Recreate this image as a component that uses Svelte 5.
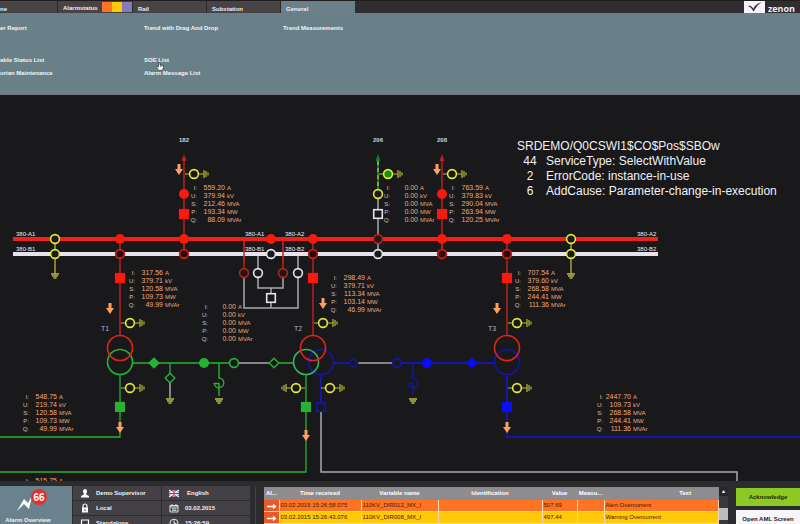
<script>
  const RED = '#f8190f'
  const DARK_RED = '#b9211d'
  const YELLOW = '#e6e838'
  const GREEN = '#28b135'
  const BLUE = '#0c0cf5'
  const NAVY = '#1515a8'
  const WHITE = '#e6e3ee'
  const GREY = '#a9a9ad'

  const names = ['I:', 'U:', 'S:', 'P:', 'Q:']
  const units = ['A', 'kV', 'MVA', 'MW', 'MVAr']

  // x is the right edge of the value column, y the first baseline
  const readings = [
    { x: 225, y: 190, values: ['559.20', '379.94', '212.46', '193.34', '88.09'] },
    { x: 418, y: 190, values: ['0.00', '0.00', '0.00', '0.00', '0.00'] },
    { x: 483, y: 190, values: ['763.59', '379.83', '290.04', '263.94', '120.25'] },
    { x: 163, y: 275, values: ['317.56', '379.71', '120.58', '109.73', '49.99'] },
    { x: 365, y: 280, values: ['298.49', '379.71', '113.34', '103.14', '46.99'] },
    { x: 549, y: 275, values: ['707.54', '379.60', '268.58', '244.41', '111.36'] },
    { x: 236, y: 309, values: ['0.00', '0.00', '0.00', '0.00', '0.00'] },
    { x: 57, y: 399, values: ['548.75', '219.74', '120.58', '109.73', '49.99'] },
    { x: 631, y: 399, values: ['2447.70', '109.73', '268.58', '244.41', '111.36'] },
    { x: 57, y: 483, values: ['515.75'] }
  ]

  const busLabels = [
    { x: 16, n: 1 },
    { x: 245, n: 1 },
    { x: 285, n: 2 },
    { x: 637, n: 2 }
  ]

  const alarms = [
    { color: 'orange', time: '03.02.2015 15:26:58.075', variable: '110KV_DIR012_MX_I', value: '507.69', text: 'Alert Overcurrent' },
    { color: 'yellow', time: '03.02.2015 15:26:43.076', variable: '110KV_DIR008_MX_I', value: '497.44', text: 'Warning Overcurrent' },
    { color: 'orange', time: '', variable: '', value: '', text: '' }
  ]
</script>

<div class="page">
  <header>
    <nav class="tabs">
      <button class="tab first">ne</button>
      <button class="tab status">Alarmstatus <span class="lights"><i class="o"></i><i class="y"></i><i class="p"></i></span></button>
      <button class="tab">Rail</button>
      <button class="tab">Substation</button>
      <button class="tab active">General</button>
    </nav>
    <div class="brand">
      <svg width="21" height="12" viewBox="0 0 21 12" aria-hidden="true">
        <rect width="21" height="12" fill="#f6f4fa" />
        <path d="M4 5.300 C6 4.300 7.700 5 9.300 7.800 C11 4.500 13 2.300 17.500 1.600 C14 3.500 12 6 9.700 10.500 C8 8.500 7 6 4 5.300Z" fill="#333238" />
      </svg>
      <span>zenon</span>
    </div>
  </header>

  <nav class="menu">
    <div class="group">
      <a href="#shift">er Report</a>
      <a href="#trend">Trend with Drag And Drop</a>
      <a href="#measurements">Trend Measurements</a>
    </div>
    <div class="group">
      <a href="#variables">able Status List</a>
      <a href="#soe" class="soe">SOE List
        <svg class="cursor" width="8" height="9" viewBox="0 0 8 9" aria-hidden="true">
          <path d="M2.500 .5 V5 L1 4.500 L.6 5.200 L2.600 8.400 H6.400 L7.400 5.500 V3.500 L4 3 V.8Z" fill="#fff" stroke="#26323a" stroke-width=".7" />
          <path d="M4.500 3.500 V5 M5.800 3.700 V5" stroke="#26323a" stroke-width=".5" />
        </svg>
      </a>
      <span></span>
      <a href="#historian">orian Maintenance</a>
      <a href="#alarms">Alarm Message List</a>
    </div>
  </nav>

  <svg class="diagram" viewBox="0 95 800 386">
    {#snippet wire(d, color, width = 1.5)}
      <path {d} fill="none" stroke={color} stroke-width={width} />
    {/snippet}

    {#snippet ring(x, y, color, fill = '#19181a')}
      <circle cx={x} cy={y} r="4.4" {fill} stroke={color} stroke-width="1.6" />
    {/snippet}

    {#snippet dot(x, y, color)}
      <circle cx={x} cy={y} r="5" fill={color} />
    {/snippet}

    {#snippet breaker(x, y, color, closed = true)}
      <rect x={x - 4.3} y={y - 4.3} width="8.600" height="8.600" fill={closed ? color : '#19181a'} stroke={color} stroke-width="1.6" />
    {/snippet}

    {#snippet diamond(x, y, color, closed = true)}
      <path d="M{x} {y - 4.8}l4.800 4.800l-4.800 4.800l-4.800-4.800Z" fill={closed ? color : '#19181a'} stroke={color} stroke-width="1.4" />
    {/snippet}

    {#snippet arrow(x, y)}
      <path d="M{x - 1.5} {y}h3v5h2.500l-4 6l-4-6h2.500Z" fill="#ffa05a" />
    {/snippet}

    {#snippet ground(x, y)}
      <path d="M{x - 4} {y}h8M{x - 3} {y + 2}h6M{x - 1.500} {y + 4}h3" stroke="#b9bb3c" stroke-width="1.3" />
    {/snippet}

    {#snippet earthing(x, y, dir = 1, fill = '#19181a')}
      <path d="M{x - 9 * dir} {y}H{x - 5 * dir}M{x + 5 * dir} {y}h{5 * dir}v-4v8M{x + 12 * dir} {y - 3}v6M{x + 14 * dir} {y - 1.500}v3" fill="none" stroke="#b9bb3c" stroke-width="1.2" />
      {@render ring(x, y, YELLOW, fill)}
    {/snippet}

    {#snippet winding(x, y, color)}
      <circle cx={x} cy={y} r="12.5" fill="none" stroke={color} stroke-width="1.6" />
    {/snippet}

    {#snippet coil(x, color)}
      <path d="M{x} 363V378a4.800 4.800 0 1 1-4.800 5.500h4.800V396" fill="none" stroke={color} stroke-width="1.4" />
      {@render ground(x, 399)}
    {/snippet}

    {#snippet feeder(x, name)}
      <text class="name" {x} y="142">{name}</text>
      <path d="M{x} 154l2.500 7h-5Z" fill={DARK_RED} />
      {@render wire(`M${x} 160V254`, DARK_RED)}
      {@render arrow(x - 5, 164)}
      {@render earthing(x + 10, 174)}
      {@render dot(x, 194, RED)}
      {@render breaker(x, 214, RED)}
    {/snippet}

    {#snippet transformerBay(x, name, arrowY)}
      {@render wire(`M${x} 254V335`, DARK_RED)}
      {@render breaker(x, 278, RED)}
      {@render arrow(name === 'T2' ? x + 10 : x - 10, arrowY)}
      {@render earthing(x + 10, 323)}
      <text class="transformer" x={x - 15} y="331">{name}</text>
    {/snippet}

    <!-- feeders and bays -->
    {@render feeder(184, '182')}
    {@render feeder(442, '208')}
    {@render transformerBay(120, 'T1', 303)}
    {@render transformerBay(313, 'T2', 298)}
    {@render transformerBay(507, 'T3', 303)}

    <text class="name" x="378" y="142">206</text>
    <path d="M378 154l2.500 7h-5Z" fill="#167d20" />
    {@render wire('M378 160V190', '#167d20', 2)}
    <path d="M378 161V190" stroke="#b9c83c" stroke-width="1.3" stroke-dasharray="4 3" />
    {@render wire('M378 198V239', GREY)}
    {@render earthing(388, 174, 1, '#139016')}
    {@render ring(378, 194, YELLOW)}
    {@render breaker(378, 214, WHITE, false)}

    <!-- coupling -->
    {@render wire('M244 278V308H298V256M271 288V308M258 256V288H283V278', GREY)}
    {@render wire('M244 239V273M283 239V273', DARK_RED)}
    {@render ring(244, 273, DARK_RED)}
    {@render ring(258, 273, WHITE)}
    {@render ring(283, 273, DARK_RED)}
    {@render ring(298, 273, WHITE)}
    {@render breaker(271, 298, WHITE, false)}

    <!-- bus bars -->
    {@render wire('M13 239H658', '#f3201a', 4)}
    {@render wire('M13 254H658', WHITE, 4)}
    {@render wire('M120 239V254M184 239V254M313 239V254M442 239V254M507 239V254M244 241V262M283 241V262', DARK_RED)}
    {@render wire('M378 239V254', GREY)}
    {#each [120, 184, 271, 313, 442, 507] as x}
      {@render dot(x, 239, RED)}
    {/each}
    {@render ring(378, 239, DARK_RED)}
    {#each [120, 184, 313, 442, 507] as x}
      {@render ring(x, 254, '#cf1d1c', '#280a0c')}
    {/each}
    {@render ring(271, 254, WHITE)}
    {@render ring(378, 254, WHITE)}
    {#each [55, 571] as x}
      {@render wire(`M${x} 239V274`, '#b9bb3c', 1.3)}
      {@render ring(x, 239, YELLOW)}
      {@render ring(x, 254, YELLOW)}
      {@render ground(x, 274)}
    {/each}
    {#each busLabels as label}
      <text class="bus" x={label.x} y="236">380-A{label.n}</text>
      <text class="bus" x={label.x} y="251">380-B{label.n}</text>
    {/each}

    <!-- green network -->
    {@render wire('M132 363H234M279 363H293M120 375V437H0M306 375V472H0M170 363V373', GREEN, 1.3)}
    {@render wire('M239 363H269M170 383V398', GREY)}
    {@render diamond(154, 363, GREEN)}
    {@render diamond(170, 378, GREEN, false)}
    {@render ground(170, 399)}
    {@render dot(204, 363, GREEN)}
    {@render coil(219, GREEN)}
    {@render ring(234, 363, GREEN)}
    {@render diamond(274, 363, GREEN, false)}
    {@render breaker(120, 407, GREEN)}
    {@render breaker(306, 407, GREEN)}
    {@render arrow(120, 422)}
    {@render arrow(306, 430)}

    <!-- blue network -->
    {@render wire('M333 363H349M402 363H495M321 375V403M507 375V437H800', NAVY, 2)}
    {@render wire('M358 363H393M321 412V472H737V481', GREY)}
    {@render diamond(353, 363, NAVY, false)}
    {@render ring(397, 363, NAVY)}
    {@render coil(413, NAVY)}
    {@render dot(427, 363, BLUE)}
    {@render diamond(472, 363, BLUE)}
    {@render breaker(321, 407, NAVY, false)}
    {@render breaker(507, 407, BLUE)}
    {@render arrow(507, 422)}

    {@render earthing(130, 388)}
    {@render earthing(296, 388, -1)}
    {@render earthing(330, 388)}
    {@render earthing(517, 388)}

    {@render winding(120, 362, GREEN)}
    {@render winding(120, 348, '#e0231c')}
    {@render winding(321, 362, NAVY)}
    {@render winding(306, 362, '#35b35a')}
    {@render winding(313, 348, '#e0231c')}
    {@render winding(507, 362, NAVY)}
    {@render winding(507, 348, '#e0231c')}

    {#each readings as reading}
      {#each reading.values as value, i}
        <text class="label" x={reading.x - 28} y={reading.y + i * 8}>{names[i]}</text>
        <text class="value" x={reading.x} y={reading.y + i * 8}>{value}</text>
        <text class="unit" x={reading.x + 2} y={reading.y + i * 8}>{units[i]}</text>
      {/each}
    {/each}

    <g class="message">
      <text x="517" y="150">SRDEMO/Q0CSWI1$CO$Pos$SBOw</text>
      <text x="530" y="165" class="code">44</text>
      <text x="546" y="165">ServiceType: SelectWithValue</text>
      <text x="530" y="180" class="code">2</text>
      <text x="546" y="180">ErrorCode: instance-in-use</text>
      <text x="530" y="195" class="code">6</text>
      <text x="546" y="195">AddCause: Parameter-change-in-execution</text>
    </g>
  </svg>

  <footer>
    <button class="overview">
      <svg width="32" height="30" viewBox="0 0 32 30" aria-hidden="true">
        <path d="M2 24L9 12L13 16L17 9L14 22L9 17Z" fill="#fff" />
        <circle cx="24" cy="10" r="8" fill="#e3302c" />
        <text x="24" y="14" class="count">66</text>
      </svg>
      <span>Alarm Overview</span>
    </button>

    <div class="info">
      <div>
        <svg width="10" height="10" viewBox="0 0 10 10"><path d="M5 1a2.200 2.400 0 0 1 1.200 4.300L6.300 6.500L9 8V9.500H1V8L3.700 6.500L3.800 5.300A2.200 2.400 0 0 1 5 1Z" fill="#fff" /></svg>
        Demo Supervisor
      </div>
      <div>
        <svg width="10" height="10" viewBox="0 0 10 10">
          <rect y="2" width="10" height="7" fill="#39407c" />
          <path d="M0 2L10 9M10 2L0 9" stroke="#f2eef4" stroke-width="1.500" />
          <path d="M5 2V9M0 5.500H10" stroke="#f2eef4" stroke-width="2.400" />
          <path d="M5 2V9M0 5.500H10" stroke="#d22b3c" stroke-width="1.200" />
        </svg>
        <span class="lang">English</span>
      </div>
      <div>
        <svg width="10" height="10" viewBox="0 0 10 10"><path d="M3 5V3a2 2 0 0 1 4 0V5" fill="none" stroke="#fff" stroke-width="1.200" /><rect x="2" y="4.500" width="6" height="5" fill="#fff" /><rect x="4.500" y="6" width="1" height="2" fill="#444" /></svg>
        Local
      </div>
      <div>
        <svg width="10" height="10" viewBox="0 0 10 10"><path d="M1 2.500H9V9H1ZM1 4H9M3 1V3M7 1V3M3 5.800H7.500M3 7.300H7.500" fill="none" stroke="#eee" stroke-width=".9" /></svg>
        03.02.2015
      </div>
      <div>
        <svg width="10" height="10" viewBox="0 0 10 10"><path d="M1.500 2H8.500V7.500H1.500ZM3.500 9H6.500" fill="none" stroke="#fff" stroke-width="1.200" /></svg>
        Standalone
      </div>
      <div>
        <svg width="10" height="10" viewBox="0 0 10 10"><circle cx="5" cy="5.200" r="4" fill="none" stroke="#eee" /><path d="M5 2.500V5.500H7.500" fill="none" stroke="#eee" /></svg>
        15:26:59
      </div>
    </div>

    <div class="alarms">
      <table>
        <thead>
          <tr>
            <th class="ack">Al...</th>
            <th class="time">Time received</th>
            <th class="variable">Variable name</th>
            <th class="ident">Identification</th>
            <th class="val">Value</th>
            <th class="unit-col">Measu...</th>
            <th class="text-col">Text</th>
          </tr>
        </thead>
        <tbody>
          {#each alarms as alarm}
            <tr class={alarm.color}>
              <td class="flag"><svg width="12" height="8" viewBox="0 0 12 8"><path d="M2 4.500H10M8 2.500L10.500 4.500L8 6.500" fill="none" stroke="#fff" stroke-width="1.300" /></svg></td>
              <td>{alarm.time}</td>
              <td>{alarm.variable}</td>
              <td></td>
              <td>{alarm.value}</td>
              <td></td>
              <td>{alarm.text}</td>
            </tr>
          {/each}
        </tbody>
      </table>
      <div class="scroll">
        <button aria-label="Scroll up">▴</button>
        <i></i>
      </div>
    </div>

    <div class="actions">
      <button class="ok">Acknowledge</button>
      <button>Open AML Screen</button>
    </div>
  </footer>
</div>

<style>
  :global(body) {
    background: #19181a;
  }
  .page {
    display: flex;
    flex-direction: column;
    height: 100vh;
    overflow: hidden;
    background: #19181a;
    font-family: "Liberation Sans", Arial, sans-serif;
    font-size: 6px;
  }
  button {
    border: 0;
    padding: 0;
    font: inherit;
    color: inherit;
  }
  header {
    display: flex;
    justify-content: space-between;
    flex: none;
    height: 13px;
    box-sizing: border-box;
    border-top: 1px solid #211c1e;
    background: #2f2d31;
    color: #f0eef2;
  }
  .tabs {
    display: flex;
  }
  .tab {
    width: 74px;
    box-sizing: border-box;
    padding: 3px 0 0 5px;
    border-right: 1px solid #2b282b;
    background: #484446;
    color: #f0eef2;
    font-weight: bold;
    line-height: 8px;
    text-align: left;
  }
  .tab.first {
    width: 58px;
    padding-left: 0;
  }
  .tab.status {
    display: flex;
    justify-content: space-between;
    width: 75px;
  }
  .tab.active {
    background: #6b8089;
    border: 0;
  }
  .lights {
    display: flex;
    height: 10px;
    margin-top: -2px;
  }
  .lights i {
    width: 10px;
  }
  .lights .o { background: #ff7326; }
  .lights .y { background: #ffcb08; }
  .lights .p { background: #827cb8; }
  .brand {
    display: flex;
    gap: 3px;
    padding-right: 5px;
    font-family: "Open Sans", sans-serif;
    font-size: 9px;
    font-weight: bold;
    line-height: 15px;
  }

  .menu {
    flex: none;
    height: 82px;
    box-sizing: border-box;
    padding-top: 9px;
    border-bottom: 1px solid #747880;
    background: #6a8089;
  }
  .group {
    display: grid;
    grid-template-columns: 144px 139px 1fr;
    grid-auto-rows: 13px;
    margin-bottom: 19px;
  }
  .menu a {
    color: #f3f6f8;
    font-weight: bold;
    line-height: 13px;
    text-decoration: none;
  }
  .soe {
    position: relative;
  }
  .cursor {
    position: absolute;
    left: 12px;
    top: 8px;
  }

  .diagram {
    display: block;
    flex: none;
    width: 100%;
  }
  .name {
    fill: #d4d4d8;
    font-size: 6px;
    font-weight: bold;
    text-anchor: middle;
  }
  .transformer {
    fill: #b4b4b8;
    font-size: 7px;
    text-anchor: middle;
  }
  .bus {
    fill: #eeecf2;
    font-size: 6px;
  }
  .label {
    fill: #c9c0bc;
    font-size: 6px;
    text-anchor: end;
  }
  .value {
    fill: #eeaa7c;
    font-size: 7px;
    text-anchor: end;
  }
  .unit {
    fill: #eeaa7c;
    font-size: 6px;
  }
  .message {
    fill: #f1f1f3;
    font-size: 12px;
  }
  .code {
    text-anchor: middle;
  }

  footer {
    display: flex;
    flex: none;
    height: 60px;
    box-sizing: border-box;
    padding-top: 5px;
    background: #2c2b2d;
    color: #f3f1f5;
  }
  .overview {
    display: flex;
    flex-direction: column;
    align-items: center;
    width: 72px;
    box-sizing: border-box;
    padding: 1px 16px 0 0;
    margin-right: 1px;
    background: #6a828d;
    font-weight: bold;
  }
  .overview svg {
    margin-left: 6px;
  }
  .count {
    fill: #fff;
    font-size: 10px;
    text-anchor: middle;
  }
  .info {
    display: grid;
    grid-template-columns: 88px 88px;
    grid-auto-rows: 14px;
    gap: 1px;
    padding-right: 5px;
    border-right: 1px solid #444246;
  }
  .info div {
    display: flex;
    align-items: center;
    gap: 6px;
    padding-left: 7px;
    background: #434145;
    font-weight: bold;
  }
  .lang {
    margin-left: 2px;
  }
  .alarms {
    display: flex;
    flex: 1;
    align-items: flex-start;
    margin: 1px 8px 0;
  }
  table {
    flex: 1;
    table-layout: fixed;
    width: 100%;
    border-collapse: collapse;
  }
  th {
    height: 13px;
    padding: 0;
    background: #8e8c8f;
    color: #fff;
    font-size: 6px;
    line-height: 11px;
  }
  .ack { width: 15px; }
  .time { width: 82px; }
  .variable { width: 77px; }
  .ident { width: 104px; }
  .val { width: 35px; }
  .unit-col { width: 27px; }
  .text-col { padding-left: 48px; }
  td {
    height: 11px;
    padding: 0 0 0 1px;
    border-bottom: 1px solid #e2d8c8;
    border-right: 1px solid #f0dcb0;
    color: #40200c;
    font-size: 6px;
    line-height: 11px;
    white-space: nowrap;
  }
  td svg {
    display: block;
  }
  .orange td { background: #ff7322; }
  .yellow td { background: #ffc808; }
  tr .flag { background: #e85a2a; }
  .scroll {
    width: 9px;
    background: #3a383c;
    align-self: stretch;
  }
  .scroll button {
    display: block;
    width: 9px;
    height: 9px;
    background: #29272a;
    color: #fff;
    line-height: 9px;
  }
  .scroll i {
    display: block;
    height: 12px;
    margin-top: 12px;
    background: #bdbbc0;
  }
  .actions {
    display: flex;
    flex-direction: column;
    gap: 4px;
    width: 64px;
    padding-top: 2px;
  }
  .actions button {
    height: 18px;
    background: #f6f5f8;
    color: #222;
    font-weight: bold;
    font-size: 6px;
  }
  .actions .ok {
    background: #8cc924;
    color: #1c2a0c;
  }
</style>
